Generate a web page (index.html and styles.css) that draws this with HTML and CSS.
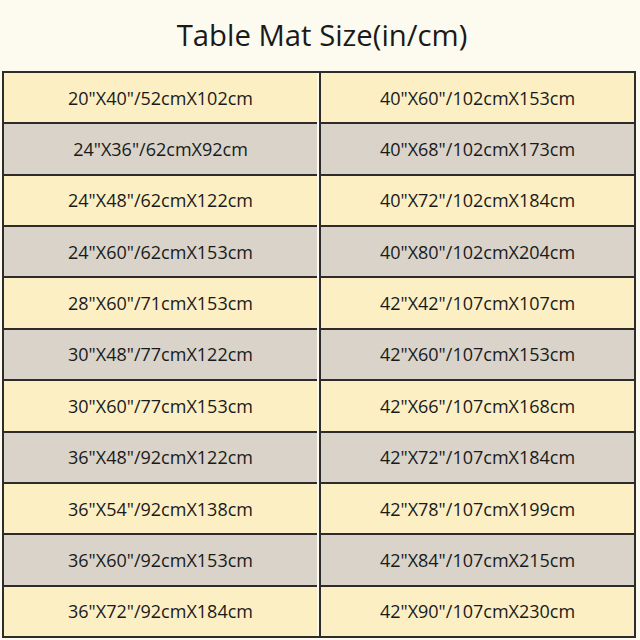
FILE: index.html
```html
<!DOCTYPE html>
<html lang="en">
<head>
<meta charset="utf-8">
<title>Table Mat Size</title>
<link rel="stylesheet" href="styles.css">
</head>
<body>
<div class="page">
  <h1 class="title">Table Mat Size(in/cm)</h1>
  <div class="table">
    <div class="col col-left">
      <div class="cell yellow">20"X40"/52cmX102cm</div>
      <div class="cell grey">24"X36"/62cmX92cm</div>
      <div class="cell yellow">24"X48"/62cmX122cm</div>
      <div class="cell grey">24"X60"/62cmX153cm</div>
      <div class="cell yellow">28"X60"/71cmX153cm</div>
      <div class="cell grey">30"X48"/77cmX122cm</div>
      <div class="cell yellow">30"X60"/77cmX153cm</div>
      <div class="cell grey">36"X48"/92cmX122cm</div>
      <div class="cell yellow">36"X54"/92cmX138cm</div>
      <div class="cell grey">36"X60"/92cmX153cm</div>
      <div class="cell yellow">36"X72"/92cmX184cm</div>
    </div>
    <div class="col col-right">
      <div class="cell yellow">40"X60"/102cmX153cm</div>
      <div class="cell grey">40"X68"/102cmX173cm</div>
      <div class="cell yellow">40"X72"/102cmX184cm</div>
      <div class="cell grey">40"X80"/102cmX204cm</div>
      <div class="cell yellow">42"X42"/107cmX107cm</div>
      <div class="cell grey">42"X60"/107cmX153cm</div>
      <div class="cell yellow">42"X66"/107cmX168cm</div>
      <div class="cell grey">42"X72"/107cmX184cm</div>
      <div class="cell yellow">42"X78"/107cmX199cm</div>
      <div class="cell grey">42"X84"/107cmX215cm</div>
      <div class="cell yellow">42"X90"/107cmX230cm</div>
    </div>
  </div>
</div>
</body>
</html>
```
FILE: styles.css
```css
html, body {
  margin: 0;
  padding: 0;
  background: #fdfbf0;
}
.page {
  width: 640px;
  height: 640px;
  box-sizing: border-box;
  padding: 0 4px 0 2px;
  display: flex;
  flex-direction: column;
  font-family: "Open Sans", "Noto Sans", sans-serif;
  color: #1a1a1a;
}
.title {
  margin: 0;
  height: 71px;
  display: flex;
  align-items: center;
  justify-content: center;
  font-size: 29.3px;
  font-weight: 400;
  padding-left: 6px;
  padding-bottom: 1px;
  box-sizing: border-box;
}
.table {
  height: 567px;
  box-sizing: border-box;
  border: 2px solid #2e2c2a;
  display: grid;
  grid-template-columns: 1fr 1fr;
}
.col {
  display: flex;
  flex-direction: column;
}
.col-left {
  border-right: 2px solid #fbf9f2;
}
.col-right {
  border-left: 2px solid #2e2c2a;
}
.cell {
  flex: 1;
  display: flex;
  align-items: center;
  justify-content: center;
  font-size: 18px;
  border-top: 2px solid #2e2c2a;
}
.cell:first-child {
  border-top: none;
}
.yellow {
  background: #fcefc4;
}
.grey {
  background: #d9d3c9;
}
```
